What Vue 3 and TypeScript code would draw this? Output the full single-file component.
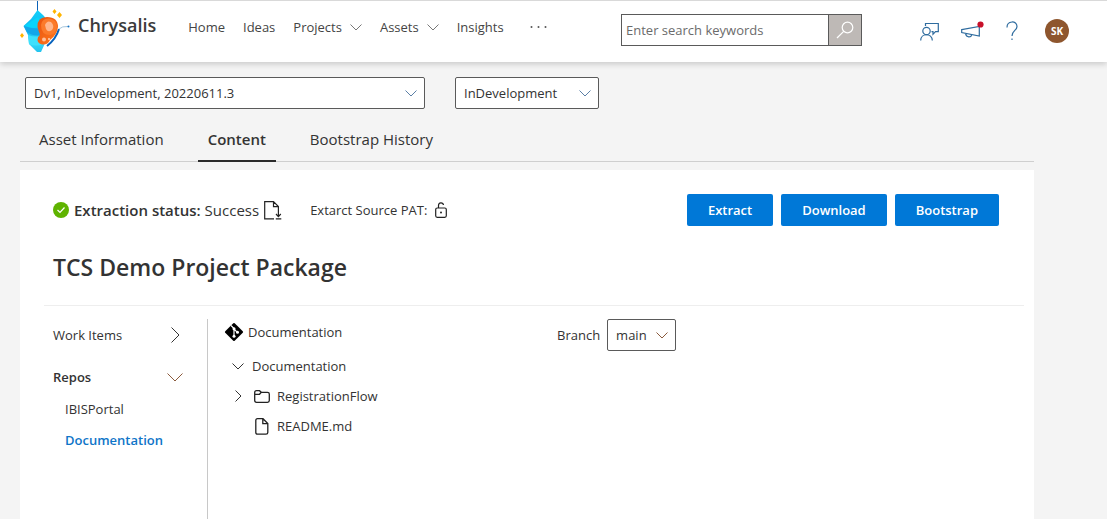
<script setup lang="ts">
import { ref } from 'vue'

interface NavItem {
  label: string
  menu: boolean
}

const navItems: NavItem[] = [
  { label: 'Home', menu: false },
  { label: 'Ideas', menu: false },
  { label: 'Projects', menu: true },
  { label: 'Assets', menu: true },
  { label: 'Insights', menu: false },
]
const tabs: string[] = ['Asset Information', 'Content', 'Bootstrap History']
const actions: string[] = ['Extract', 'Download', 'Bootstrap']
const repos: string[] = ['IBISPortal', 'Documentation']

const activeTab = ref('Content')
const activeRepo = ref('Documentation')
const keywords = ref('')
const version = ref('Dv1, InDevelopment, 20220611.3')
const stage = ref('InDevelopment')
const branch = ref('main')
</script>

<template>
  <div class="page">
    <header class="topbar">
      <a class="brand" href="#">
        <svg class="logo" width="52" height="54" viewBox="0 0 52 54" aria-hidden="true">
          <defs>
            <linearGradient id="cocoon" x1="0" y1="0" x2="0" y2="1">
              <stop offset="0" stop-color="#12d0fa" />
              <stop offset="0.5" stop-color="#10b4f0" />
              <stop offset="0.75" stop-color="#35dcfb" />
              <stop offset="1" stop-color="#25c3ee" />
            </linearGradient>
            <linearGradient id="wing" x1="0" y1="0" x2="1" y2="1">
              <stop offset="0" stop-color="#e8520f" />
              <stop offset="1" stop-color="#ff7a1e" />
            </linearGradient>
          </defs>
          <path d="M18.500 0V12" stroke="#0b62b8" stroke-width="1" />
          <path d="M18.500 9L24 14L33 24L27 40L22 51L18 51L10 43L9 34L4.500 25L12 18Z" fill="url(#cocoon)" />
          <path d="M5 25Q15 29 26 25L19 16Z" fill="#08d4fb" />
          <path d="M8 31Q16 37 27 33V27Q15 29 5 25Z" fill="#12a6ea" />
          <path d="M9 34Q17 37 26 34L25 43Q16 46 10 43Z" fill="#3ee0fc" />
          <path d="M28 45Q37 38 40 28" fill="none" stroke="#0763bd" stroke-width="2" />
          <path d="M40 28Q43 25 49 25.500" fill="none" stroke="#a5c5dc" stroke-width="1" />
          <circle cx="49.500" cy="25.500" r="1" fill="#1673c4" />
          <path d="M18.500 26Q18 16 28 16Q39 16 39 26Q38 34 31 39Q29 44 23 43.500Q17 42 19 36Q22 34 20 31Z" fill="url(#wing)" />
          <path d="M22 24Q23 17 30 17.500Q38 18.500 38 26Q37 33 31 34Q22 34 22 24Z" fill="#fb7a2a" />
          <path d="M26 24Q28 19 32 21Q36 25 33 29Q29 32 27 28Z" fill="#ffb68c" />
          <circle cx="25" cy="38.500" r="2" fill="#ffc09a" />
          <circle cx="30" cy="38" r="1" fill="#ffd5b8" />
          <path d="M35.500 8L37.500 10.500L35.500 13L33.500 10.500ZM40.500 11L43 14L40.500 17L38 14ZM3 32L5 34.500L3 37L1 34.500Z" fill="#ffb400" />
        </svg>
        <span>Chrysalis</span>
      </a>
      <nav class="nav" aria-label="Main">
        <a v-for="item in navItems" :key="item.label" href="#" class="nav-link">
          {{ item.label }}
          <svg v-if="item.menu" width="12" height="7" viewBox="0 0 12 7" class="chev"><path d="M0.500 0.500L6 6L11.500 0.500" /></svg>
        </a>
        <button class="plain more" type="button" aria-label="More">
          <svg width="17" height="4" viewBox="0 0 17 4" fill="#555"><circle cx="1.500" cy="2" r="1" /><circle cx="8.500" cy="2" r="1" /><circle cx="15.500" cy="2" r="1" /></svg>
        </button>
      </nav>
      <form class="search" role="search" @submit.prevent>
        <input v-model="keywords" type="search" placeholder="Enter search keywords" aria-label="Search keywords">
        <button type="submit" aria-label="Search">
          <svg width="18" height="18" viewBox="0 0 18 18" fill="none" stroke="#fff" stroke-width="1.200"><circle cx="11.500" cy="6.500" r="5.300" /><path d="M7.700 10.300L1 17" /></svg>
        </button>
      </form>
      <div class="tools">
        <button class="plain" type="button" aria-label="Feedback">
          <svg width="19" height="19" viewBox="0 0 19 19" fill="none" stroke="#2f6c9f" stroke-width="1.200"><circle cx="6.500" cy="9" r="3.700" /><path d="M0.700 18.500C0.700 10.800 12.300 10.800 12.300 18.500M5.500 4V1.500H18.300V9.600H15.500L13 12.300V9.600H11.500" /></svg>
        </button>
        <button class="plain" type="button" aria-label="Announcements">
          <svg width="23" height="20" viewBox="0 0 23 20" fill="none" stroke="#2f6c9f" stroke-width="1.200"><path d="M0.700 8.600L18.300 5.500V15L0.700 11.600ZM4.500 12.600C5.500 16.800 10 16.600 10.700 13.800" /><circle cx="19.500" cy="3.500" r="3.100" fill="#c8102a" stroke="none" /></svg>
        </button>
        <button class="plain" type="button" aria-label="Help">
          <svg width="12" height="20" viewBox="0 0 12 20" fill="none" stroke="#2f6c9f" stroke-width="1.200"><path d="M1 6.500C1 -0.700 11 -0.700 11 5.500C11 9.500 6 9.500 6 15" /><path d="M6 17.500V19" /></svg>
        </button>
        <button class="avatar" type="button" aria-label="Account SK">SK</button>
      </div>
    </header>

    <main class="main">
      <div class="filters">
        <div class="picker version">
          <select v-model="version" aria-label="Version"><option>Dv1, InDevelopment, 20220611.3</option></select>
          <svg width="12" height="7" viewBox="0 0 12 7" class="chev blue"><path d="M0.500 0.500L6 6L11.500 0.500" /></svg>
        </div>
        <div class="picker stage">
          <select v-model="stage" aria-label="Stage"><option>InDevelopment</option></select>
          <svg width="12" height="7" viewBox="0 0 12 7" class="chev blue"><path d="M0.500 0.500L6 6L11.500 0.500" /></svg>
        </div>
      </div>

      <div class="tabs" role="tablist">
        <button
          v-for="tab in tabs"
          :key="tab"
          type="button"
          role="tab"
          class="tab"
          :class="{ active: tab === activeTab }"
          :aria-selected="tab === activeTab"
          @click="activeTab = tab"
        >{{ tab }}</button>
      </div>

      <section class="card">
        <div class="status-row">
          <svg width="16" height="16" viewBox="0 0 16 16"><circle cx="8" cy="8" r="8" fill="#5fb300" /><path d="M4.500 8L7 10.500L11.500 5.500" fill="none" stroke="#fff" stroke-width="1.200" /></svg>
          <p class="status"><strong>Extraction status:</strong> Success</p>
          <button class="plain log" type="button" aria-label="Download log">
            <svg width="18" height="19" viewBox="0 0 18 19" fill="none" stroke="#222" stroke-width="1.200"><path d="M10 17.900H0.700V0.700H9.500L14.400 5.600V9M9.500 0.700V5.600H14.400M14.400 9V15.500M12 13L14.400 15.600L16.800 13M11.800 17.900H17.300" /></svg>
          </button>
          <span class="pat">Extarct Source PAT:</span>
          <button class="plain lock" type="button" aria-label="Unlock token">
            <svg width="12" height="16" viewBox="0 0 12 16" fill="none" stroke="#222" stroke-width="1.200"><rect x="0.700" y="6" width="10.600" height="9.300" rx="1.500" /><path d="M3.500 6V3.500C3.500 0 8 0 8.500 3" /><circle cx="6" cy="10.500" r="1" fill="#222" stroke="none" /></svg>
          </button>
          <div class="actions">
            <button v-for="action in actions" :key="action" type="button" class="primary">{{ action }}</button>
          </div>
        </div>

        <h1>TCS Demo Project Package</h1>

        <div class="body">
          <aside class="side">
            <button class="plain group" type="button">
              Work Items
              <svg width="9" height="16" viewBox="0 0 9 16" class="chev dark"><path d="M0.500 0.500L8 8L0.500 15.500" /></svg>
            </button>
            <button class="plain group open" type="button" aria-expanded="true">
              Repos
              <svg width="16" height="9" viewBox="0 0 16 9" class="chev rust"><path d="M0.500 0.500L8 8L15.500 0.500" /></svg>
            </button>
            <ul class="repos">
              <li v-for="repo in repos" :key="repo">
                <a href="#" :class="{ current: repo === activeRepo }" @click.prevent="activeRepo = repo">{{ repo }}</a>
              </li>
            </ul>
          </aside>

          <div class="tree">
            <div class="repo-name">
              <svg width="20" height="20" viewBox="0 0 20 20"><rect x="3.300" y="3.300" width="13.400" height="13.400" rx="1" fill="#000" transform="rotate(45 10 10)" /><path d="M7 3.500L10 6.500V14.500M10 7L13.300 10.300" fill="none" stroke="#fff" stroke-width="1.200" /><circle cx="10" cy="6.800" r="1.500" fill="#fff" /><circle cx="10" cy="14.300" r="1.500" fill="#fff" /><circle cx="13.500" cy="10.300" r="1.500" fill="#fff" /></svg>
              <span>Documentation</span>
            </div>
            <button class="plain row root" type="button" aria-expanded="true">
              <svg width="12" height="7" viewBox="0 0 12 7" class="chev dark"><path d="M0.500 0.500L6 6L11.500 0.500" /></svg>
              <span>Documentation</span>
            </button>
            <button class="plain row folder" type="button">
              <svg width="7" height="12" viewBox="0 0 7 12" class="chev dark"><path d="M0.500 0.500L6 6L0.500 11.500" /></svg>
              <svg class="kind" width="16" height="13" viewBox="0 0 16 13" fill="none" stroke="#222" stroke-width="1.300"><path d="M0.700 2.500Q0.700 0.700 2.500 0.700H5.500L7.300 2.300H13.500Q15.300 2.300 15.300 4V10.500Q15.300 12.300 13.500 12.300H2.500Q0.700 12.300 0.700 10.500ZM0.700 4.300H5.500L7.300 2.300" /></svg>
              <span>RegistrationFlow</span>
            </button>
            <a class="row file" href="#">
              <svg class="kind" width="16" height="17" viewBox="0 0 16 17" fill="none" stroke="#222" stroke-width="1.300"><path d="M3.500 0.700H9L13.800 5.500V14.500Q13.800 16.200 12 16.200H3.500Q1.800 16.200 1.800 14.500V2.400Q1.800 0.700 3.500 0.700ZM8.800 0.700V5.700H13.800" /></svg>
              <span>README.md</span>
            </a>
          </div>

          <div class="branch">
            <label for="branch">Branch</label>
            <div class="picker main-branch">
              <select id="branch" v-model="branch"><option>main</option></select>
              <svg width="12" height="7" viewBox="0 0 12 7" class="chev rust"><path d="M0.500 0.500L6 6L11.500 0.500" /></svg>
            </div>
          </div>
        </div>
      </section>
    </main>
  </div>
</template>

<style>
body {
  margin: 0;
  background: #f4f4f4;
}
</style>

<style scoped>
.page {
  display: flex;
  flex-direction: column;
  min-height: 100vh;
  box-sizing: border-box;
  font: 13px/20px "Open Sans", "Noto Sans", sans-serif;
  color: #333;
}
button,
input,
select {
  font: inherit;
  color: inherit;
}
svg {
  display: block;
  flex: none;
}
a {
  color: inherit;
  text-decoration: none;
}
.plain {
  display: block;
  padding: 0;
  border: 0;
  background: none;
  cursor: pointer;
}
.chev {
  fill: none;
  stroke: #777;
}
.chev.blue {
  stroke: #5b7fa6;
}
.chev.dark {
  stroke: #333;
}
.chev.rust {
  stroke: #8a5a3c;
}

.topbar {
  display: flex;
  align-items: flex-start;
  height: 61px;
  padding: 0 38px 0 19px;
  border-top: 1px solid #d9d9d9;
  background: #fff;
  box-shadow: 0 2px 6px rgba(0, 0, 0, 0.18);
}
.brand {
  display: flex;
  gap: 7px;
  font-size: 18px;
  line-height: 48px;
  font-weight: 600;
  color: #3b3b3b;
}
.nav {
  display: flex;
  align-items: center;
  gap: 18px;
  height: 52px;
  margin-left: 32px;
}
.nav-link {
  display: flex;
  align-items: center;
  gap: 8px;
  color: #444;
}
.more {
  margin-left: 8px;
}
.search {
  display: flex;
  box-sizing: border-box;
  width: 241px;
  height: 32px;
  margin: 13px 58px 0 auto;
  border: 1px solid #5a5a5a;
}
.search input {
  flex: 1;
  min-width: 0;
  padding: 0 4px;
  border: 0;
  background: #fff;
}
.search input::placeholder {
  color: #6b6b6b;
  opacity: 1;
}
.search button {
  display: flex;
  align-items: center;
  justify-content: center;
  width: 33px;
  padding: 0;
  border: 0;
  border-left: 1px solid #5a5a5a;
  background: #beb9b6;
}
.tools {
  display: flex;
  align-items: center;
  gap: 22px;
  height: 60px;
}
.avatar {
  width: 24px;
  height: 24px;
  margin-left: 5px;
  padding: 0;
  border: 0;
  border-radius: 50%;
  background: #8e562e;
  color: #fff;
  font-size: 10px;
  font-weight: 700;
}

.main {
  display: flex;
  flex: 1;
  flex-direction: column;
  margin: 0 73px 0 20px;
  padding-top: 15px;
}
.filters {
  display: flex;
  gap: 30px;
  padding-left: 5px;
}
.picker {
  display: grid;
  align-items: center;
}
.picker > * {
  grid-area: 1 / 1;
}
.picker select {
  width: 100%;
  height: 32px;
  padding: 0 28px 0 8px;
  border: 1px solid #5a5a5a;
  border-radius: 2px;
  background: #fff;
  appearance: none;
}
.picker svg {
  justify-self: end;
  margin-right: 8px;
  pointer-events: none;
}
.version {
  width: 400px;
}
.stage {
  width: 144px;
}
.main-branch {
  width: 69px;
}
.tabs {
  display: flex;
  gap: 24px;
  margin-top: 8px;
  padding-left: 9px;
  border-bottom: 1px solid #cfcfcf;
}
.tab {
  height: 45px;
  margin-bottom: -1px;
  padding: 0 10px;
  border: 0;
  border-bottom: 2px solid transparent;
  background: none;
  font-size: 15px;
}
.tab.active {
  border-bottom-color: #2b2b2b;
  font-weight: 600;
}

.card {
  flex: 1;
  display: flex;
  flex-direction: column;
  margin-top: 8px;
  padding: 24px 10px 0 24px;
  background: #fff;
}
.status-row {
  display: flex;
  align-items: center;
  padding: 0 25px 0 9px;
}
.status {
  margin: 0 5px;
  font-size: 15px;
}
.status strong {
  font-weight: 600;
}
.pat {
  margin: 0 8px 0 28px;
}
.actions {
  display: flex;
  gap: 8px;
  margin-left: auto;
}
.primary {
  height: 32px;
  padding: 0 21px;
  border: 0;
  border-radius: 2px;
  background: #0078d7;
  color: #fff;
  font-weight: 600;
}
h1 {
  margin: 24px 0 20px;
  padding-left: 9px;
  font-size: 23px;
  line-height: 35px;
  font-weight: 600;
}
.body {
  flex: 1;
  display: flex;
  padding-top: 13px;
  border-top: 1px solid #eee;
}
.side {
  box-sizing: border-box;
  width: 164px;
  padding: 6px 24px 0 9px;
  border-right: 1px solid #c8c8c8;
}
.group {
  display: flex;
  align-items: center;
  justify-content: space-between;
  width: 100%;
  padding-right: 3px;
}
.group.open {
  margin-top: 22px;
  padding-right: 0;
  font-weight: 600;
}
.repos {
  margin: 12px 0 0;
  padding: 0 0 0 12px;
  list-style: none;
}
.repos li {
  margin-bottom: 11px;
}
.repos .current {
  color: #0f75c8;
  font-weight: 600;
}
.tree {
  flex: none;
  width: 349px;
  padding: 3px 0 0 16px;
  box-sizing: border-box;
}
.repo-name,
.row {
  display: flex;
  align-items: center;
}
.repo-name {
  gap: 4px;
}
.row {
  height: 20px;
  margin-top: 10px;
}
.root {
  gap: 8px;
  margin-top: 14px;
  padding-left: 8px;
}
.folder {
  padding-left: 11px;
}
.folder .kind {
  margin-left: 12px;
}
.file {
  padding-left: 30px;
}
.kind {
  margin-right: 7px;
}
.branch {
  display: flex;
  align-items: center;
  align-self: flex-start;
  gap: 7px;
}
</style>
